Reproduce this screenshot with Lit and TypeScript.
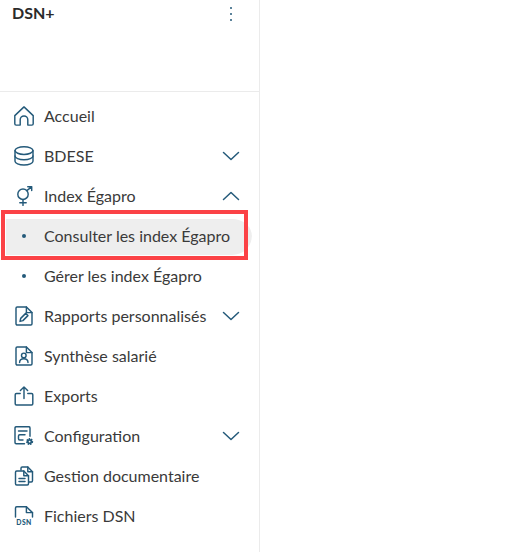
import { LitElement, html, css, svg } from "lit";
import { customElement } from "lit/decorators.js";

const ic = (body: unknown) => html`<svg class="icon" viewBox="0 0 20 20" fill="none" stroke="#245a7a" stroke-width="1.45" stroke-linecap="round" stroke-linejoin="round">${body}</svg>`;
const icons: Record<string, unknown> = {
  home: ic(svg`<path d="M.8 9.6 10 .9l9.2 8.7v8.2a1.3 1.3 0 0 1-1.3 1.3h-4.1v-5.3a3.8 3.8 0 0 0-7.6 0v5.3H2.1a1.3 1.3 0 0 1-1.3-1.3z"/>`),
  db: ic(svg`<ellipse cx="10" cy="4.6" rx="9" ry="3.8"/><path d="M1 4.6v10.6c0 2.1 4 3.8 9 3.8s9-1.7 9-3.8V4.6"/><path d="M1 9.9c0 2.1 4 3.8 9 3.8s9-1.7 9-3.8"/>`),
  gender: ic(svg`<circle cx="9" cy="8.2" r="5.2"/><path d="M9 13.4v6M5.8 16.8h6.4M12.8 4.6 17.6 .9M13.8 .7h3.9v3.7"/>`),
  report: ic(svg`<path d="M12.4 1H3.2A1.2 1.2 0 0 0 2 2.2v15.6A1.2 1.2 0 0 0 3.2 19h13.6a1.2 1.2 0 0 0 1.2-1.2V6.6z"/><path d="M12.4 1v5.6H18"/><path d="m6 15.4.7-3 5-5 2.2 2.2-5 5z" stroke-width="1.5"/>`),
  person: ic(svg`<path d="M12.4 1H3.2A1.2 1.2 0 0 0 2 2.2v15.6A1.2 1.2 0 0 0 3.2 19h13.6a1.2 1.2 0 0 0 1.2-1.2V6.6z"/><path d="M12.4 1v5.6H18"/><circle cx="9.8" cy="9.4" r="2.3"/><path d="M5.6 16.5c0-2.4 1.8-3.8 4.2-3.8s4.2 1.4 4.2 3.8"/>`),
  export: ic(svg`<path d="M6.2 7.5H2.4a1.2 1.2 0 0 0-1.2 1.2v9.1A1.2 1.2 0 0 0 2.4 19h15.2a1.2 1.2 0 0 0 1.2-1.2V8.7a1.2 1.2 0 0 0-1.2-1.2h-3.8"/><path d="M10 12.5V1M6.4 4.4 10 .9l3.6 3.5"/>`),
  config: ic(svg`<path d="M10.5 17.8H2.2A1.2 1.2 0 0 1 1 16.6V1.9A1.2 1.2 0 0 1 2.2.7h12.6A1.2 1.2 0 0 1 16 1.9v8.3"/><path d="M4.5 5h8.5M11 8.8H5.7a1.2 1.2 0 0 0-1.2 1.2v2.8a1.2 1.2 0 0 0 1.2 1.2H9"/><circle cx="15.6" cy="15.6" r="2.7" fill="#245a7a" stroke-width="1.7" stroke-dasharray="1.4 .9" stroke-linecap="butt"/><circle cx="15.6" cy="15.6" r=".9" fill="#fff" stroke="none"/>`),
  docs: ic(svg`<path d="M7 4V2.2A1.2 1.2 0 0 1 8.2 1h5.6l4.7 4.7v9.1a1.2 1.2 0 0 1-1.2 1.2H15"/><path d="M13.8 1v4.7h4.7"/><path d="M9.8 5H2.7a1.2 1.2 0 0 0-1.2 1.2v11.6A1.2 1.2 0 0 0 2.7 19h10.6a1.2 1.2 0 0 0 1.2-1.2V9.7z"/><path d="M9.8 5v4.7h4.7M5 12.5h6M5 15.5h6"/>`),
  dsn: html`<svg class="icon" viewBox="0 0 20 20" fill="none" stroke="#245a7a" stroke-width="1.45" stroke-linecap="round" stroke-linejoin="round"><path d="M1.5 11V2A1.2 1.2 0 0 1 2.7 .8h9.7l6.1 5.8V11"/><path d="M12.4.8v5.8h6.1"/><text x="10" y="18.6" text-anchor="middle" fill="#245a7a" stroke="none" font-family="Lato, sans-serif" font-size="6.8" font-weight="900" letter-spacing=".4">DSN</text></svg>`,
};

const chevron = (up: boolean) => html`<svg class="chev" viewBox="0 0 18 10" fill="none" stroke="#245a7a" stroke-width="1.5" stroke-linecap="round" stroke-linejoin="round"><path d=${up ? "M1.5 8.5 9 1.5l7.5 7" : "M1.5 1.5 9 8.5l7.5-7"}/></svg>`;

type Item = { label: string; icon?: string; chev?: "up" | "down"; active?: boolean };
const items: Item[] = [
  { label: "Accueil", icon: "home" },
  { label: "BDESE", icon: "db", chev: "down" },
  { label: "Index Égapro", icon: "gender", chev: "up" },
  { label: "Consulter les index Égapro", active: true },
  { label: "Gérer les index Égapro" },
  { label: "Rapports personnalisés", icon: "report", chev: "down" },
  { label: "Synthèse salarié", icon: "person" },
  { label: "Exports", icon: "export" },
  { label: "Configuration", icon: "config", chev: "down" },
  { label: "Gestion documentaire", icon: "docs" },
  { label: "Fichiers DSN", icon: "dsn" },
];

@customElement("app-root")
export class AppRoot extends LitElement {
  static styles = css`
    :host { display: block; width: 526px; height: 552px; overflow: hidden; background: #fff; font-family: Lato, sans-serif; color: #333; }
    .side { width: 260px; height: 552px; box-sizing: border-box; border-right: 1px solid #ebebeb; }
    .head { height: 92px; box-sizing: border-box; border-bottom: 1px solid #ebebeb; display: flex; justify-content: space-between; align-items: flex-start; padding: 3px 20px 0 12px; }
    .title { font-size: 16px; font-weight: 700; line-height: 20px; color: #2b2b2b; }
    .more { display: flex; flex-direction: column; gap: 4px; padding-top: 4px; margin-right: 7px; }
    .more i { width: 2px; height: 2px; border-radius: 50%; background: #245a7a; }
    nav { padding-top: 4px; }
    .row { position: relative; height: 40px; display: flex; align-items: center; font-size: 16px; padding-left: 14px; color: #3a3a3a; }
    .label { margin-bottom: 2px; }
    .icon { width: 20px; height: 20px; margin-right: 10px; flex: none; }
    .dot { width: 20px; margin-right: 10px; display: flex; flex: none; justify-content: center; }
    .dot i { width: 4px; height: 4px; border-radius: 50%; background: #245a7a; }
    .chev { position: absolute; left: 222px; top: 15px; width: 18px; height: 10px; }
    .active { background: #eeeeee; background-clip: padding-box; border-top: 3px solid transparent; border-bottom: 1px solid transparent; margin-left: 6px; padding-left: 8px; padding-bottom: 2px; width: 246px; box-sizing: border-box; border-radius: 0 20px 20px 0; }
    .mark { position: absolute; left: 1px; top: 210px; width: 247px; height: 50px; box-sizing: border-box; border: 4.5px solid #fb4246; pointer-events: none; }
  `;

  render() {
    return html`<div class="side">
      <div class="head">
        <div class="title">DSN+</div>
        <div class="more"><i></i><i></i><i></i></div>
      </div>
      <nav>
        ${items.map(
          (it) => html`<div class="row ${it.active ? "active" : ""}">
            ${it.icon ? icons[it.icon] : html`<span class="dot"><i></i></span>`}
            <span class="label">${it.label}</span>
            ${it.chev ? chevron(it.chev === "up") : ""}
          </div>`
        )}
      </nav>
      <div class="mark"></div>
    </div>`;
  }
}
